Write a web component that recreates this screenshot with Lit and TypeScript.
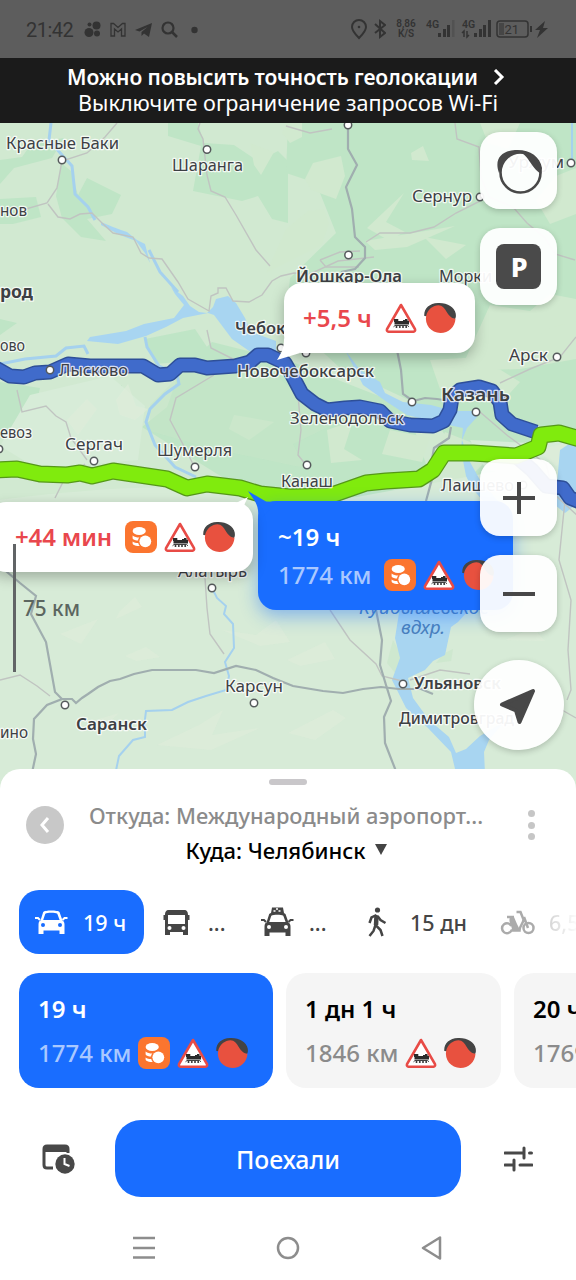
import { LitElement, html, svg, css } from "lit";
import { customElement } from "lit/decorators.js";

const coin = svg`<rect width="32" height="32" rx="8" fill="#fb752f"/>
  <ellipse cx="14.2" cy="10" rx="6.6" ry="4" fill="#fff"/>
  <path d="M7.6 14.5c1.8 1.6 4 2 6.8 2-1 1.100-1.300 2-1.300 3-2.400 0-4.500-.6-5.500-2zM7.600 20.500c1.500 1.200 3.300 1.600 5.600 1.600.2 1.200.8 2 1.500 3-3.500 0-6.600-.8-7.100-2.600z" fill="#fff"/>
  <circle cx="20.300" cy="20.300" r="5.900" fill="#fff"/>`;

const rail = svg`<path d="M16 3 30 27.200a1.800 1.800 0 0 1-1.500 2.500H3.500A1.800 1.800 0 0 1 2 27.200z" fill="#fff" stroke="#e84b46" stroke-width="2.600" stroke-linejoin="round"/>
  <path d="M9 17h4.300v2h4.700v-1h2v-1h2.500v1.800h1.500V22.500H9.500v-2.500H9z" fill="#2b2b2b"/>
  <path d="M8.500 24.800 10 23.500h12.500l1.500 1.300" fill="none" stroke="#2b2b2b" stroke-width=".9"/>
  <g fill="#2b2b2b"><circle cx="11.500" cy="25" r="1"/><circle cx="14.800" cy="25" r="1"/><circle cx="18" cy="25" r="1"/><circle cx="21.200" cy="25" r="1"/></g>`;

const ball = svg`<path d="M.3 14C-.4 7 5 1.300 14 1c9-.5 16.500 4 17.700 10.500.4 3 .2 4-.7 5.500z" fill="#444"/>
  <path d="M2.200 13.500C4 7.500 9 3.300 14.500 3.300c8 0 8 12.800 17 13.400C31 25 24.500 31 16.500 31 7 31 .3 22.500 2.200 13.500z" fill="#e8513f"/>`;

const icon = (glyph: unknown) => html`<svg class="hazard" viewBox="0 0 32 32">${glyph}</svg>`;

interface Label { t: string; x: number; y: number; w: number; s?: number; b?: number; }
const labels: Label[] = [
  { t: "Красные Баки", x: 6, y: 149, w: 113 },
  { t: "Шаранга", x: 172, y: 171, w: 71 },
  { t: "нов", x: 0, y: 216, w: 27 },
  { t: "род", x: 0, y: 298, w: 33, s: 18, b: 700 },
  { t: "Сернур", x: 412, y: 202, w: 60 },
  { t: "Уржум", x: 508, y: 168, w: 56 },
  { t: "Йошкар-Ола", x: 296, y: 282, w: 106, s: 16.5, b: 600 },
  { t: "Морки", x: 439, y: 282, w: 53 },
  { t: "Чебоксары", x: 235, y: 334, w: 92, s: 16.5, b: 600 },
  { t: "ово", x: 0, y: 351, w: 25 },
  { t: "Лысково", x: 59, y: 376, w: 69 },
  { t: "Новочебоксарск", x: 237, y: 377, w: 137, b: 500 },
  { t: "Арск", x: 509, y: 361, w: 39 },
  { t: "Казань", x: 441, y: 401, w: 69, s: 18.5, b: 600 },
  { t: "Зеленодольск", x: 290, y: 424, w: 114 },
  { t: "евоз", x: 0, y: 438, w: 32 },
  { t: "Сергач", x: 65, y: 450, w: 58 },
  { t: "Шумерля", x: 157, y: 456, w: 75 },
  { t: "Канаш", x: 281, y: 487, w: 52 },
  { t: "Лаишево", x: 441, y: 491, w: 73 },
  { t: "Алатырь", x: 178, y: 577, w: 69 },
  { t: "Карсун", x: 225, y: 692, w: 58 },
  { t: "Саранск", x: 76, y: 730, w: 71, s: 16.5, b: 600 },
  { t: "ино", x: 0, y: 738, w: 28 },
  { t: "Ульяновск", x: 414, y: 689, w: 87, s: 16, b: 600 },
  { t: "Димитровград", x: 399, y: 724, w: 115, b: 500 },
];
const towns = [[62, 160], [207, 149.5], [348, 125], [348.5, 255], [480, 197], [571, 163], [557, 357], [50, 370], [94, 461], [195, 467], [307, 465], [412, 402], [476, 412], [523, 485], [281, 348], [306, 353], [212, 588], [254, 703], [65, 705], [403, 684], [-1, 449]];

const blue = "M-4 368L10 376L24 377L35 373L50 372L68 364L90 366L143 366L158 375L170 374L180 365L195 365L207 368L235 366L250 362L258 355L268 355L285 363L292 375L302 394L315 404L327 410L345 408L360 407L380 411L390 421L410 425L433 426L444 421L450 410L452 397L460 390L479 387L492 391L500 402L502 415L512 424L536 432M518 458L532 470L546 486L563 488L570 498L580 502";
const green = "M-4 470L17 469L40 474L67 475L80 473L92 476L113 471L140 475L167 479L187 488L207 484L240 488L260 494L290 497L329 496L366 483L386 481L419 479L433 470L444 453L473 453L516 456L538 447L541 435L559 433L580 439";

const terrain = svg`
  <g fill="#bfe5c6">
    <path d="M0 160l22-3 10-14 32-5-12 20-38 10L0 184zM0 199l36-2 5 20-28 7H0zM61 163l10 8 7 24 9-17 34 17-9 19-25 5 19 22-25-4-19-19-6-22z"/>
    <path d="M168 123h30l6 20 30 2 24 16 20-10 10 10v62l-16-4-14-23-16 5-49-10 8-45-33-10z"/>
    <path d="M288 123h288v410l-90-40-60-85-86-40-54-50 4-40 46-45-20-50-30-10z"/>
    <path d="M212 342l80 20 115 45 30 90H290l-60-15-88-55 25-20 12-34z"/>
    <path d="M0 382l40 6-8 34-32 14zM98 403l24-18-3 26-20-4zM0 319l17 4-17 12zM145 339l50-10 20 30-60 5z"/>
    <path d="M410 520l120 20 46 50v50l-50-20-20-40-50 10z" opacity=".3"/>
  </g>
  <g fill="#d1e9cf">
    <path d="M305 179l8-16 28-7 4 20-9 23-25-9zM411 153l12-7 6 15-17-1zM250 143l24 9-13 23-7-10zM286 229l22-18 16-2 5 14-7 22-20 10-36 18zM367 228l37-35-18 29 19 10-17 8zM365 241l90-15-48 21-32 3zM536 200l20-24 20-8v46l-26 10zM480 123h40l-12 26-20-6z"/>
    <path d="M490 305l40 6 20-17 26 5v60l-56 10-60 2zM430 360l50-3 40 25-20 22-60-15zM390 430l40 8-8 24-40-8zM445 432l50 20-30 30-34-16zM327 430l26-9-9 28 18 11-31 3z"/>
    <path d="M286 123h16v14l-12 6-8-10zM424 237l42 8-20 14zM542 330l34-9v30l-38 9zM234 415l40 7-25 18-20-11z"/>
  </g>
  <path d="M0 500C80 490 180 480 260 496L340 500 450 480 530 465 576 500V800H0z" fill="#d7ebd7"/>
  <path d="M30 395l80-19 35 30-7 54-100 9-38-23zM470 440l60 3 46-4v44l-90-13z" fill="#d7ecd8"/>
  <g fill="#c6e5c9" opacity=".55">
    <path d="M420 505l60 0 40 70-14 12-40-28zM393 640l9 16-6 18-9-11zM436 663l7-9 10-5-2 12zM150 405l36-36 70-12 34 31 48 34-45 22 12 24-95-20-60-17z"/>
  </g>
  <g fill="#e0eddb" opacity=".6">
    <path d="M120 611l15-14 7 10-26 12zM60 634l38-15-17 25zM157 745l42-20 24-15-11 25 48-7-49 22zM95 720l24-7-20 19zM288 733l45-23 13 8-31 22zM287 660l38-18 10 17-35 7zM190 521l23-16 20 12zM505 640l28-12 12 13zM222 630l34 5 20-15 14 22-30 4zM125 656l21-9 14 10-24 4z"/>
    <path d="M116 400l12-16 8 22 12 3-13 11-15-5zM67 420l20-21 10 10-19 26zM538 450l25-6 13 10-20 12z"/>
  </g>
  <g fill="#a8d5f1">
    <path d="M101 222l12 5 8 3 6 2 10 8 8 4 5 19-5-10-9-12-16-6-19-10z"/>
    <path d="M171 287l12 9 7 10 9 6 8 1 6-6 3-8 12-3 8 7 9 15 6 14 25 9v18l-24-6-20-14-18-24-6-2-25 5-17 9-20 9-28 8-31-3 3-4 36-6 18-7 30-6 10-13-9-11z"/>
    <path d="M345 350l15 20 20 12 5 11 18 9 28 3 22 6 20 0 4 6-10 11-5 12 8 22 10 18 24 28-10 6-22-26-6-12-5-26 2-22-24-5-32-8-20-13-24-17z"/>
    <path d="M400 600h78l-20 22-7 5-6 28-12 6-8 9-17 8 5 20 16 22 20 17 7 16 10-4 14-13 25-15-16 19-5 12 2 42h-25l-10-42-24-25-21-19-14-28 8-22-5-20 4-25z"/>
    <path d="M560 450l18-12v65l-13 10-10-8z"/>
  </g>
  <g fill="none" stroke="#a5d1ee" stroke-width="2">
    <path d="M51 123l-2 17 13 15 10 11 3 28 13 13 7 13M149 250l11 22 18 20M0 364l25-5 31-3 10-8 18-2 4 8M145 337l2 10 12 19 18 8 2 10-14 10-15 15-4 13 9 23 20 22 21 10" stroke-width="3"/>
    <path d="M213 590l4 8 9 8-2 8 9 10 1 24-9 14 4 14-3 14-20 6-18 6-16 8-26 1-1 8 0 18-12 3-14 16-5 24M572 123v40"/>
  </g>
  <g fill="none" stroke="#c0c4c1" stroke-width="1.400">
    <path d="M117 123l-12 14-18 16-25 8-5 27-10 15-28 8M48 204l10 13 12 2 10-5 12-1 10 10 11 10 20 4 8 16 8 5 13 1 16 23 10 17 21 12 2-15 7-3 0-5 8 0 7 13 16 1 13-7 10-14 9-5 13-3 16 1 28-13 36-4M200 123l-2 6 5 10 4 36 4 16 14 6 11 18 20 35 14 16"/>
    <path d="M286 126l24 7 22-4M455 123l2 16 22 8 2 30 8 20 24 10 14 16 18 15 10 16 20 6M366 242l14-9 30 0 24-6 22-14 24-12M320 260l20-8 20-1M320 260l6 7 33 0"/>
    <path d="M17 390l5 22 24-6 10 10 10 6 5 16 16 22M85 464l-20 14-10 20M214 375l-38 23-6 22 16 30 10 20M207 330l4 18 24 12M480 412l28 24 38 28 8 30 26 24M500 383l30-14 30-12 16-20M298 395l3 35-3 25 8 10"/>
    <path d="M205 578l2 30 3 26 14 20M330 610l20 30 26 24 6 12 20 5M0 680l20-5 17 11 13 10M565 500l-6 60 12 40-3 50 3 40-4 10M410 680l30-10 30 4M562 710l14 8" />
  </g>
  <g fill="none" stroke="#a0aeaf" stroke-width="2.200">
    <path d="M348 127l0 22 9 16-11 22 6 22 3 28 10 10 0 11-10 11-14 3M397 350l4 20 2 24 10 7 12-3 12 1 20 3M451 427l-2 11-15 10-2 11 0 20-6 22"/>
    <path d="M0 566l20 17 16 13-5 18 15 28 9 50 7 7-15 6-13 14-1 20 3 15-10 47M62 699l10 0 4 4 6-5 6-4 10-7 12-6 10-2 14-5 18-4 44 0 18 3 22-7 20 4 17 8 20 8 30 5 20 2 20-4 18-2 18 2 22 0 12 5"/>
    <path d="M376 610l6 30-2 25 6 20 5 16-7 16 1 26 16 41"/>
  </g>`;

@customElement("route-map")
class RouteMap extends LitElement {
  static styles = css`
    :host { display: block; height: 670px; position: relative; overflow: hidden; background: #d1e9d1; font-family: "Noto Sans", sans-serif; }
    .map { display: block; width: 576px; height: 670px; }
    .lbl { fill: #3d4044; stroke: #fff; stroke-opacity: .8; stroke-width: 2.500px; paint-order: stroke; stroke-linejoin: round; }
    .water { fill: #4880bd; font-style: italic; }
    .scale { fill: #5c6660; font-weight: 500; }
    .pop { position: absolute; box-sizing: border-box; display: flex; align-items: center; background: #fff; border-radius: 18px; box-shadow: 0 5px 14px #0004; color: #e9474d; font-weight: 600; font-size: 24px; line-height: 32px; white-space: pre; }
    .p1 { left: 284px; top: 160px; width: 191px; height: 70px; padding-left: 19px; }
    .p2 { left: -12px; top: 379px; width: 265px; height: 70px; padding-left: 27px; }
    .p3 { left: 258px; top: 378px; width: 255px; height: 109px; padding: 20px 20px 0; background: #196dff; color: #fff; flex-direction: column; align-items: flex-start; box-shadow: 0 6px 18px #196dff70; }
    .tail { position: absolute; width: 30px; height: 24px; overflow: visible; }
    .t1 { left: -7px; top: 55px; fill: #fff; }
    .t2 { left: 246px; top: -5px; fill: #fff; }
    .t3 { left: -10px; top: -10px; fill: #196dff; }
    .hazard { width: 32px; height: 32px; flex: none; }
    .icons { display: flex; gap: 7px; }
    .m1 { width: 82px; }
    .m2 { width: 110px; letter-spacing: -.15px; }
    .row { display: flex; align-items: center; margin-top: 6px; }
    .km { color: #a9c8ff; width: 106px; font-weight: 500; }
    .sm { font-size: 24px; line-height: 32px; }
    .tools { position: absolute; left: 474px; top: 9px; width: 90px; display: flex; flex-direction: column; align-items: center; }
    .btn { width: 77px; height: 77px; border-radius: 20px; background: #fffffff0; box-shadow: 0 2px 6px #0003; display: grid; place-items: center; margin: 0 0 19px -1px; box-sizing: border-box; }
    .plus { margin-top: 135px; }
    .round { width: 90px; height: 90px; border-radius: 50%; margin: 9px 0 0 -1px; }
    .bar { position: absolute; left: 13px; top: 421px; width: 3px; height: 128px; background: #616466; }
  `;
  render() {
    return html`
      <svg class="map" viewBox="0 123 576 670">
        ${terrain}
        <path d=${blue} fill="none" stroke="#2e4f98" stroke-width="15" stroke-linejoin="round"/>
        <path d=${blue} fill="none" stroke="#406bcb" stroke-width="12" stroke-linejoin="round"/>
        <path d=${green} fill="none" stroke="#559818" stroke-width="17" stroke-linejoin="round"/>
        <path d=${green} fill="none" stroke="#80eb0d" stroke-width="14.500" stroke-linejoin="round"/>
        ${towns.map(([x, y]) => svg`<circle cx=${x} cy=${y} r="3.700" fill="#fff" stroke="#555a5c" stroke-width="1.500"/>`)}
        ${labels.map((l) => svg`<text class="lbl" x=${l.x} y=${l.y} textLength=${l.w} font-size=${l.s ?? 16.5} font-weight=${l.b ?? 400} lengthAdjust="spacingAndGlyphs">${l.t}</text>`)}
        <text class="water" x="359" y="614" textLength="130" font-size="17.500" lengthAdjust="spacingAndGlyphs">Куйбышевское</text>
        <text class="water" x="401" y="634" textLength="44" font-size="17.500" lengthAdjust="spacingAndGlyphs">вдхр.</text>
        <text class="scale" x="23" y="616" textLength="57" font-size="21" lengthAdjust="spacingAndGlyphs">75 км</text>
      </svg>
      <div class="pop p3">
        <svg class="tail t3" viewBox="0 0 30 24"><path d="M0 0 18 10.500 30 11 10.200 30V22C10 12 5 8 0 0z"/></svg>
        <span class="sm">~19 ч</span>
        <div class="row"><span class="km">1774 км</span><div class="icons">${icon(coin)}${icon(rail)}${icon(ball)}</div></div>
      </div>
      <div class="pop p1">
        <svg class="tail t1" viewBox="0 0 30 24"><path d="M7 0C7 10 5 14 0 22l23-7z"/></svg>
        <span class="m1">+5,5 ч</span><div class="icons">${icon(rail)}${icon(ball)}</div>
      </div>
      <div class="pop p2">
        <svg class="tail t2" viewBox="0 0 30 24"><path d="M0 7 14 0C10 8 8 12 8 24z"/></svg>
        <span class="m2">+44 мин</span><div class="icons">${icon(coin)}${icon(rail)}${icon(ball)}</div>
      </div>
      <div class="bar"></div>
      <div class="tools">
        <div class="btn"><svg width="48" height="48" viewBox="0 0 48 48"><path d="M4 26C-1 12 6 4 20 3c14-1 25 6 27 18l-1 6C35 20 33 6 24 6 14 6 9 14 7 20z" fill="#484848"/><circle cx="25.500" cy="25.500" r="20" fill="none" stroke="#484848" stroke-width="2.600"/></svg></div>
        <div class="btn"><svg width="45" height="45" viewBox="0 0 45 45"><rect width="45" height="45" rx="8" fill="#4a4a4a"/><text x="23.200" y="32.500" text-anchor="middle" font-size="27" font-weight="800" fill="#fff">P</text></svg></div>
        <div class="btn plus"><svg width="32" height="32" viewBox="0 0 32 32"><path d="M16 0v32M0 16h32" stroke="#484848" stroke-width="4"/></svg></div>
        <div class="btn"><svg width="32" height="32" viewBox="0 0 32 32"><path d="M0 16h32" stroke="#484848" stroke-width="4"/></svg></div>
        <div class="btn round"><svg width="40" height="40" viewBox="0 0 40 40"><path d="M34 6 20.500 37 17 25.500 3 19.500z" fill="#484848" stroke="#484848" stroke-width="4" stroke-linejoin="round"/></svg></div>
      </div>`;
  }
}

const car = svg`<path d="M8.200 2C9.500 0 23 0 24.500 2l3 8.500c2 1 2 3 2 5V24h-5v-3.500h-16V24h-5v-8c0-3 0-4.500 2-5.500zM10.300 3.800 8.200 10h16.400l-2.300-6.200C20 2.500 12.500 2.500 10.300 3.800z" fill-rule="evenodd" fill="currentColor"/><path d="M0 8h3l2 2M32.500 8h-3l-2 2" stroke="currentColor" stroke-width="2" fill="none"/>`;

@customElement("app-root")
class AppRoot extends LitElement {
  static styles = css`
    :host { display: flex; flex-direction: column; width: 576px; height: 1280px; overflow: hidden; background: #fff; font-family: "Noto Sans", sans-serif; }
    .status { height: 58px; flex: none; background: #5d5d5d; color: #333; display: flex; align-items: center; box-sizing: border-box; padding: 2px 25px 0 26px; font-family: Roboto, sans-serif; }
    .clock { font-size: 20px; width: 58px; letter-spacing: -.5px; }
    .status svg { display: block; flex: none; }
    .sp { flex: 1; }
    .speed { font-size: 10px; line-height: 10px; text-align: center; font-weight: 600; width: 22px; margin: 0 8px 2px 9px; white-space: nowrap; }
    .banner { height: 65px; flex: none; background: #1b1b1b; color: #fff; display: flex; flex-direction: column; align-items: center; box-sizing: border-box; padding-top: 6px; font-size: 21px; line-height: 26px; white-space: nowrap; }
    .b1 { font-weight: 600; display: flex; align-items: center; gap: 15px; margin-left: -4px; }
    .b2 { font-size: 21.600px; }
    .t-b1 { letter-spacing: -.1px; }
    route-map { flex: none; }
    .sheet { position: relative; margin-top: -24px; height: 511px; background: #fff; border-radius: 20px 20px 0 0; box-sizing: border-box; }
    .grab { width: 38px; height: 6px; border-radius: 3px; background: #c9c7ca; margin: 0 auto; }
    .top { height: 10px; }
    .head { display: flex; align-items: center; height: 80px; padding: 0 26px; box-sizing: border-box; }
    .back { width: 38px; height: 38px; border-radius: 50%; background: #c8c8c8; display: grid; place-items: center; }
    .dirs { flex: 1; text-align: center; font-size: 21.800px; line-height: 34px; font-weight: 500; color: #8b8b8b; white-space: nowrap; padding: 15px 4px 0 0; }
    .to { color: #000; display: flex; justify-content: center; align-items: center; gap: 9px; font-size: 22px; }
    .dots { display: flex; flex-direction: column; gap: 4.500px; width: 38px; align-items: center; }
    .dot { width: 7px; height: 7px; border-radius: 50%; background: #c6c6c6; }
    .modes { display: flex; align-items: center; height: 64px; margin-top: 25px; padding-left: 19px; color: #454545; font-size: 21.500px; font-weight: 500; overflow: hidden; white-space: nowrap; }
    .mode { display: flex; align-items: center; flex: none; box-sizing: border-box; }
    .on { width: 125px; height: 64px; border-radius: 20px; background: #196dff; color: #fff; padding-left: 16px; gap: 15px; }
    .bus { width: 117px; padding-left: 19px; gap: 18px; }
    .taxi { width: 107px; gap: 15px; }
    .walk { width: 132px; gap: 22px; }
    .bike { gap: 14px; color: #ababab; }
    .fade { background: linear-gradient(90deg, #d5d5d5, #fff 30px); -webkit-background-clip: text; color: transparent; }
    .cards { display: flex; gap: 13px; margin-top: 19px; padding-left: 19px; overflow: hidden; }
    .card { height: 115px; flex: none; border-radius: 20px; background: #f5f5f5; box-sizing: border-box; padding: 20px 19px 0; font-size: 24px; line-height: 32px; font-weight: 600; white-space: nowrap; color: #000; }
    .c1 { width: 254px; background: #196dff; color: #fff; }
    .c2 { width: 215px; }
    .c3 { width: 215px; }
    .meta { display: flex; align-items: center; gap: 7px; margin-top: 12px; color: #8b8b8b; font-weight: 500; }
    .c1 .meta { color: #a9c8ff; }
    .num { width: 93px; }
    .hazard { width: 32px; height: 32px; flex: none; }
    .go { display: flex; align-items: center; margin-top: 32px; padding: 0 42px; }
    .cta { width: 346px; height: 77px; border-radius: 26px; background: #196dff; color: #fff; display: grid; place-items: center; font-size: 24.800px; font-weight: 500; margin: 0 43px 0 40px; }
    .nav { display: flex; justify-content: space-between; padding: 0 132px 0 132px; margin-top: 39px; }
  `;
  render() {
    return html`
      <div class="status">
        <span class="clock">21:42</span>
        <svg width="118" height="24" viewBox="0 0 118 24" fill="#333">
          <circle cx="5" cy="14.500" r="4.500"/><circle cx="12.500" cy="7.500" r="4"/><circle cx="5.500" cy="6.500" r="2"/><circle cx="13" cy="15.500" r="3"/>
          <path d="M27 18V5.500h2.500l4.500 4 4.500-4H41V18h-3.500v-7L34 14l-3.500-3v7z" fill="none" stroke="#333" stroke-width="1.300"/>
          <path d="M51 12 68 5l-3 14-5-3.500-2.500 2.500v-4l6-5-8 4.500z"/>
          <circle cx="84" cy="10" r="5.500" fill="none" stroke="#333" stroke-width="2.200"/><path d="m88 14 5 5" stroke="#333" stroke-width="2.500"/>
          <circle cx="110.500" cy="12" r="3.200"/>
        </svg>
        <span class="sp"></span>
        <svg width="37" height="24" viewBox="0 0 37 24" fill="none" stroke="#333" stroke-width="2">
          <path d="M10 20C6 16 3 13 3 9a7 7 0 0 1 14 0c0 4-3 7-7 11z"/><circle cx="10" cy="9" r="1.300" fill="#333" stroke="none"/>
          <path d="m26 6 10 9-5 4V3l5 4-10 8"/>
        </svg>
        <div class="speed">8,86<br>K/S</div>
        <svg width="126" height="24" viewBox="0 0 126 24" fill="#333">
          <g font-size="10.500" font-weight="600"><text x="1" y="10">4G</text><text x="37" y="10">4G</text></g>
          <rect x="13" y="15" width="3" height="4"/><rect x="18" y="11" width="3" height="8"/><rect x="22" y="7" width="3" height="12"/><rect x="27" y="2" width="2.500" height="17" opacity=".25"/>
          <path d="M39 19v-6l-2 2M42 13v6l2-2" stroke="#333" stroke-width="1.500" fill="none"/>
          <rect x="49" y="15" width="3" height="4"/><rect x="54" y="11" width="3" height="8"/><rect x="58" y="7" width="3" height="12"/><rect x="63" y="2" width="3" height="17"/>
          <rect x="72" y="3" width="31" height="16" rx="3" fill="none" stroke="#333" stroke-width="1.500"/><rect x="74" y="5" width="5" height="12" opacity=".55"/><path d="M105 8h2v6h-2z"/>
          <text x="79.500" y="16" font-size="13">21</text><path d="m120 3-10 9h5l-3 8 11-10h-5z"/>
        </svg>
      </div>
      <div class="banner">
        <div class="b1"><span class="t-b1">Можно повысить точность геолокации</span><svg width="12" height="16" viewBox="0 0 12 16"><path d="m2 1 7 7-7 7" fill="none" stroke="#fff" stroke-width="3"/></svg></div>
        <div class="b2">Выключите ограничение запросов Wi-Fi</div>
      </div>
      <route-map></route-map>
      <div class="sheet">
        <div class="top"></div><div class="grab"></div>
        <div class="head">
          <div class="back"><svg width="12" height="18" viewBox="0 0 12 18"><path d="M9 2 3 9l6 7" fill="none" stroke="#fff" stroke-width="3"/></svg></div>
          <div class="dirs"><div class="from">Откуда: Международный аэропорт...</div><div class="to">Куда: Челябинск<svg width="12" height="11" viewBox="0 0 12 11"><path d="M0 0h12L6 11z" fill="#444"/></svg></div></div>
          <div class="dots"><i class="dot"></i><i class="dot"></i><i class="dot"></i></div>
        </div>
        <div class="modes">
          <div class="mode on"><svg width="33" height="24" viewBox="0 0 33 24">${car}<g fill="#196dff"><circle cx="8" cy="15" r="2"/><circle cx="25" cy="15" r="2"/></g></svg><span>19 ч</span></div>
          <div class="mode bus"><svg width="27" height="27" viewBox="0 0 27 27"><path d="M6 1h15c3 0 4 2 4 5h1.500v5H25v15h-5v-3H7v3H2V11H.5V6H2c0-3 1-5 4-5zM5 6v9h17V6z" fill="#454545" fill-rule="evenodd"/><circle cx="6.500" cy="19" r="2" fill="#fff"/><circle cx="20.500" cy="19" r="2" fill="#fff"/></svg><span>...</span></div>
          <div class="mode taxi"><svg width="33" height="30" viewBox="0 0 33 30"><path d="M10 6l1-5.500h11l1 5.500z" fill="currentColor"/><path d="M12.500 4h2M15 2h2M17.500 4h2" stroke="#fff" stroke-width="1.300"/><g transform="translate(0 5)">${car}</g><circle cx="8" cy="20" r="2" fill="#fff"/><circle cx="25" cy="20" r="2" fill="#fff"/></svg><span>...</span></div>
          <div class="mode walk"><svg width="20" height="30" viewBox="0 0 20 30" fill="none" stroke="#454545" stroke-width="2.500"><circle cx="9.500" cy="3" r="2.600" fill="#454545" stroke="none"/><path d="m8.500 8-1 10 5 5 2 6M7.500 18l-2 6-4 5M8.500 8l-5 2.500-2 5.500M9.500 9l3 4 5 3"/><path d="m8.500 9-.5 9" stroke-width="4.500"/></svg><span>15 дн</span></div>
          <div class="mode bike"><svg width="35" height="25" viewBox="0 0 35 25" fill="none" stroke="#ababab" stroke-width="2.500"><circle cx="28.500" cy="18" r="5"/><path d="M11.500 16a5 5 0 1 0 0 4.500h8c0-5 4-7 4-11L20.500 2h-4M24 7l4 11M7 7h7"/><path d="M10 7h4l3 7 2 4v2h-7c0-5-4-7-2-13z" fill="#ababab" stroke="none"/></svg><span class="fade">6,5 дн</span></div>
        </div>
        <div class="cards">
          <div class="card c1">19 ч<div class="meta"><span class="num">1774 км</span>${icon(coin)}${icon(rail)}${icon(ball)}</div></div>
          <div class="card c2">1 дн 1 ч<div class="meta"><span class="num">1846 км</span>${icon(rail)}${icon(ball)}</div></div>
          <div class="card c3">20 ч<div class="meta"><span class="num">1769 км</span></div></div>
        </div>
        <div class="go">
          <svg width="33" height="30" viewBox="0 0 33 30"><path d="M11 24H5c-2 0-3-1-3-3V5c0-2 1-3 3-3h18c2 0 3 1 3 3v4" fill="none" stroke="#484848" stroke-width="3"/><path d="M2 3h24v5H2z" fill="#484848"/><circle cx="23" cy="20" r="11" fill="#fff"/><circle cx="23" cy="20" r="9.700" fill="#484848"/><path d="M22.500 14v6l5 2" fill="none" stroke="#fff" stroke-width="2"/></svg>
          <div class="cta">Поехали</div>
          <svg width="29" height="26" viewBox="0 0 29 26"><path d="M1 7h19M20 2v10M25.500 7h2M1 19h8M10 14v10M16 19h12" stroke="#484848" stroke-width="3" stroke-linecap="round"/></svg>
        </div>
        <div class="nav">
          <svg width="24" height="24" viewBox="0 0 24 24"><path d="M1 2h22M1 12h22M1 21.500h22" stroke="#8d8d8d" stroke-width="2.500"/></svg>
          <svg width="24" height="24" viewBox="0 0 24 24"><circle cx="12" cy="12" r="10" fill="none" stroke="#8d8d8d" stroke-width="2.500"/></svg>
          <svg width="24" height="24" viewBox="0 0 24 24"><path d="M20 1.500v21L3 12z" fill="none" stroke="#8d8d8d" stroke-width="2.500" stroke-linejoin="round"/></svg>
        </div>
      </div>`;
  }
}
